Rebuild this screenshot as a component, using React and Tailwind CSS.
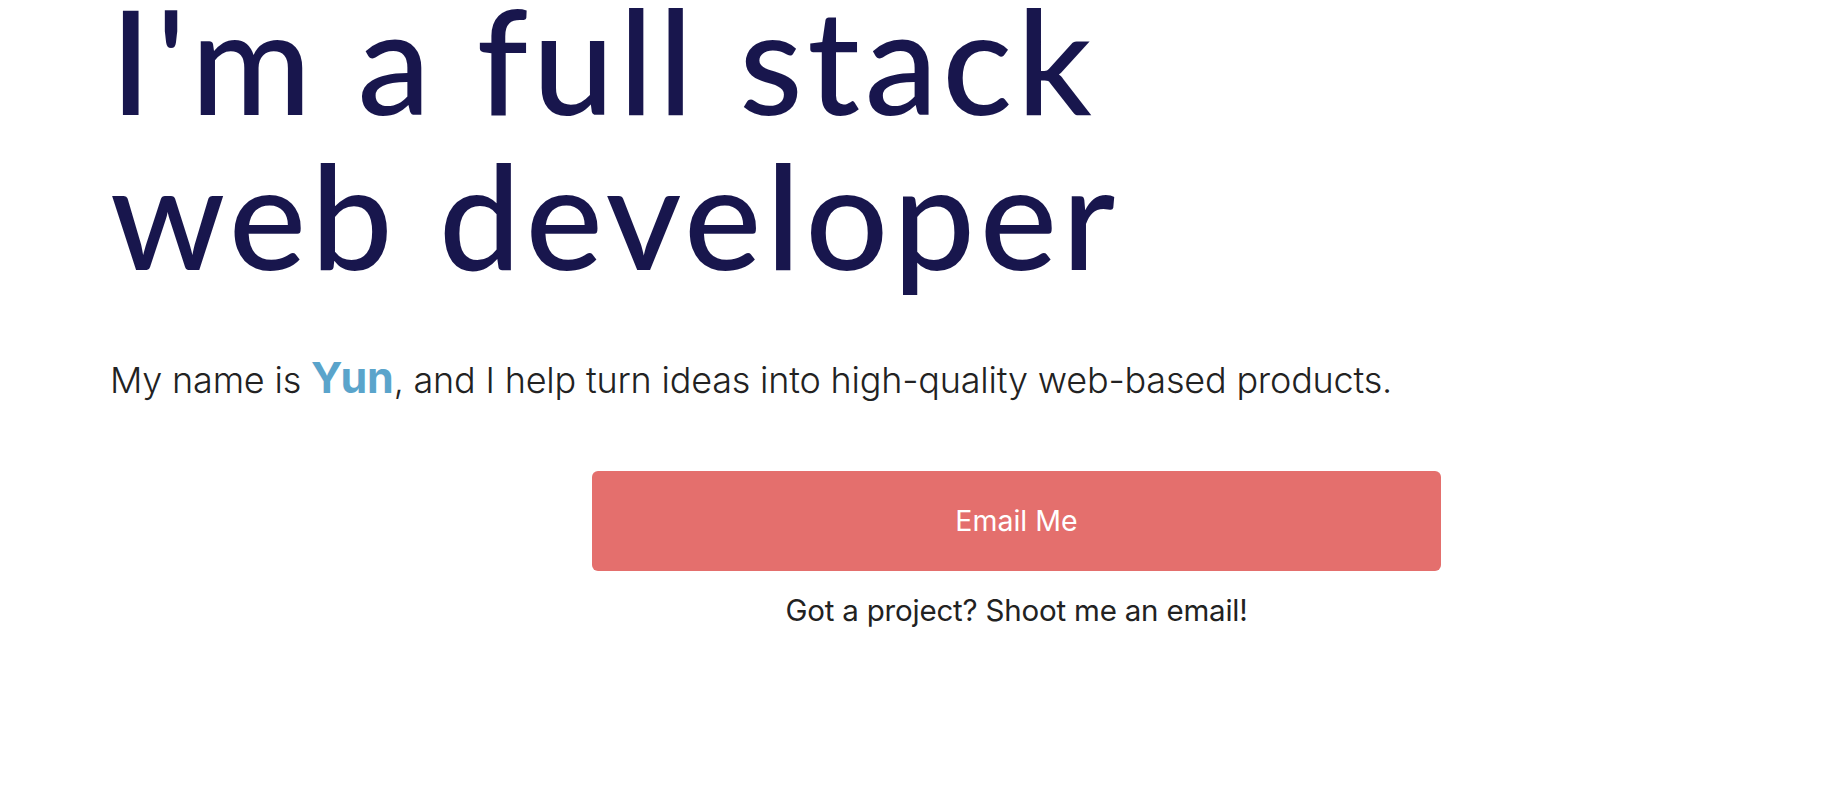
export default function App() {
  return (
    <div className="w-[1836px] h-[806px] bg-white overflow-hidden">
      <div className="pl-[110px] pt-0">
        <h1
          className="text-[146px] leading-[155px] font-medium text-[#18164d] -mt-[19px] tracking-[4.6px]"
          style={{ fontFamily: 'Lato, "Open Sans", sans-serif' }}
        >
          I'm a full stack
          <br />
          web developer
        </h1>
        <p
          className="mt-[62px] text-[36px] font-light text-[#222] leading-[48px] tracking-[-0.2px]"
          style={{ fontFamily: 'Inter, "Noto Sans", sans-serif' }}
        >
          My name is{" "}
          <span className="text-[43px] font-bold text-[#5aa4cb]">Yun</span>, and I help turn ideas into high-quality web-based products.
        </p>
        <div
          className="ml-[482px] mt-[67px] w-[849px] flex flex-col items-center"
          style={{ fontFamily: 'Inter, "Noto Sans", sans-serif' }}
        >
          <button className="w-full h-[100px] rounded-[6px] bg-[#e46f6d] text-white text-[28.5px] font-normal">
            Email Me
          </button>
          <p className="mt-[17px] text-[29.5px] text-[#222] tracking-[-0.2px]">Got a project? Shoot me an email!</p>
        </div>
      </div>
    </div>
  );
}
